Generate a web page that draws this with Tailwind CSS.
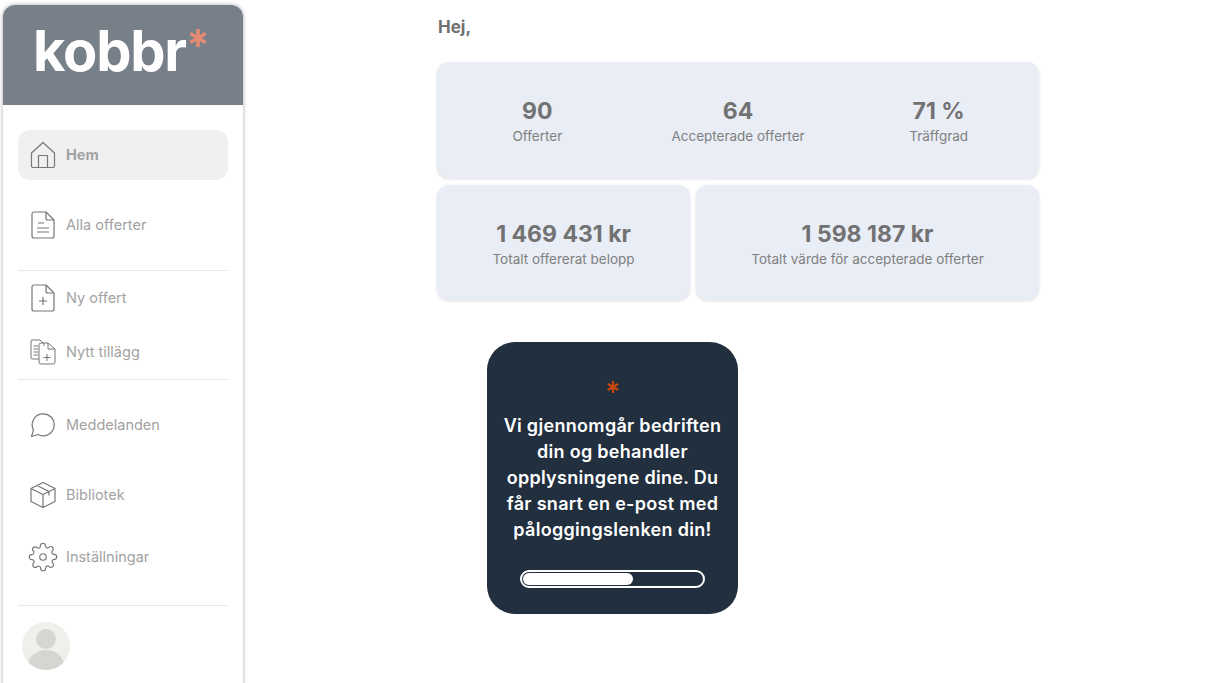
<!DOCTYPE html>
<html lang="en">
<head>
  <meta charset="UTF-8" />
  <title>Kobbr</title>
  <script src="https://cdn.jsdelivr.net/npm/@tailwindcss/browser@4"></script>
</head>
<body class="bg-white font-['Inter',sans-serif] h-[683px] overflow-hidden">
  <div class="flex h-[683px] overflow-hidden">
    <!-- sidebar -->
    <aside class="ml-[3px] mt-[5px] w-[240px] h-[700px] shrink-0 bg-white rounded-t-xl shadow-[0_0_4px_rgba(0,0,0,0.35)]">
      <div class="h-[100px] bg-[#777f89] rounded-t-xl flex items-start pl-[30px] pt-[10px]">
        <span class="text-[56px] leading-[72px] font-bold tracking-[-1.2px] text-white">kobbr</span>
        <svg class="w-[20px] h-[20px] mt-[13px] ml-[2px]" viewBox="0 0 22 22" fill="none" stroke="#e58a72" stroke-width="4"><path d="M11 1v20M2.500 6l17 10M19.500 6l-17 10"/></svg>
      </div>
      <nav class="px-[15px] pt-[25px] text-[14.500px] text-[#a2a2a2]">
        <a class="flex items-center h-[50px] rounded-xl bg-[#f0f0f0] font-bold pl-[12px] gap-[10px]">
          <svg class="w-[26px] h-[28px]" viewBox="0 0 26 28" fill="none" stroke="#777" stroke-width="1.200" stroke-linejoin="round"><path d="M1.500 12 13 1.500 24.500 12V25a1.500 1.500 0 0 1-1.500 1.500H3A1.500 1.500 0 0 1 1.500 25z"/><path d="M8.500 26.500V14.500h9v12"/></svg>
          Hem
        </a>
        <a class="flex items-center h-[50px] mt-[20px] pl-[12px] gap-[10px]">
          <svg class="w-[26px] h-[28px]" viewBox="0 0 26 28" fill="none" stroke="#777" stroke-width="1.200" stroke-linejoin="round"><path d="M16 1H4a2 2 0 0 0-2 2v22a2 2 0 0 0 2 2h18a2 2 0 0 0 2-2V9z"/><path d="M16 1v6a2 2 0 0 0 2 2h6M8 12h6M7 17h12M7 21h12"/></svg>
          Alla offerter
        </a>
        <div class="h-px bg-[#e8e8e8] mt-[20px]"></div>
        <a class="flex items-center h-[50px] mt-[2px] pl-[12px] gap-[10px]">
          <svg class="w-[26px] h-[28px]" viewBox="0 0 26 28" fill="none" stroke="#777" stroke-width="1.200" stroke-linejoin="round"><path d="M16 1H4a2 2 0 0 0-2 2v22a2 2 0 0 0 2 2h18a2 2 0 0 0 2-2V9z"/><path d="M16 1v6a2 2 0 0 0 2 2h6M13 13v8M9 17h8"/></svg>
          Ny offert
        </a>
        <a class="flex items-center h-[50px] mt-[4px] pl-[12px] gap-[10px]">
          <svg class="w-[26px] h-[26px]" viewBox="0 0 26 26" fill="none" stroke="#777" stroke-width="1" stroke-linejoin="round"><path d="M9 20H2a1 1 0 0 1-1-1V2a1 1 0 0 1 1-1h8l4 4v2"/><path d="M3.500 7H8M3.500 10H8M3.500 13H8M3.500 16H8"/><path d="M18 4h-7a2 2 0 0 0-2 2v17a2 2 0 0 0 2 2h12a2 2 0 0 0 2-2V10z"/><path d="M18 4v6h7M17 15v7M13.500 18.500h7"/></svg>
          Nytt tillägg
        </a>
        <div class="h-px bg-[#e8e8e8] mt-[2px]"></div>
        <a class="flex items-center h-[50px] mt-[20px] pl-[12px] gap-[10px]">
          <svg class="w-[26px] h-[26px]" viewBox="0 0 26 26" fill="none" stroke="#777" stroke-width="1.200" stroke-linejoin="round"><path d="M1.500 24.500 3.500 18A11 11 0 1 1 8 22.500z"/></svg>
          Meddelanden
        </a>
        <a class="flex items-center h-[50px] mt-[20px] pl-[12px] gap-[10px]">
          <svg class="w-[26px] h-[28px]" viewBox="0 0 26 28" fill="none" stroke="#777" stroke-width="1.200" stroke-linejoin="round"><path d="M13 1.500 25 7.500v13l-12 6-12-6v-13zM1 7.500l12 6 12-6M13 13.500v13M7 4.500l12 6v4"/></svg>
          Bibliotek
        </a>
        <a class="flex items-center h-[50px] mt-[12px] pl-[10px] gap-[8px]">
          <svg class="w-[30px] h-[30px]" viewBox="0 0 24 24" fill="none" stroke="#777" stroke-width="0.950" stroke-linejoin="round"><circle cx="12" cy="12" r="2.600"/><path d="M19.400 15a1.650 1.650 0 0 0 .33 1.820l.06.06a2 2 0 1 1-2.830 2.830l-.06-.06a1.650 1.650 0 0 0-2.800 1.170V21a2 2 0 1 1-4 0v-.09a1.650 1.650 0 0 0-2.800-1.170l-.06.06a2 2 0 1 1-2.830-2.830l.06-.06a1.650 1.650 0 0 0-1.170-2.800H3a2 2 0 1 1 0-4h.09a1.650 1.650 0 0 0 1.170-2.800l-.06-.06a2 2 0 1 1 2.830-2.830l.06.06a1.650 1.650 0 0 0 2.800-1.170V3a2 2 0 1 1 4 0v.09a1.650 1.650 0 0 0 2.800 1.170l.06-.06a2 2 0 1 1 2.830 2.830l-.06.06a1.650 1.650 0 0 0 1.170 2.800H21a2 2 0 1 1 0 4h-.09a1.650 1.650 0 0 0-1.510 1.110z"/></svg>
          Inställningar
        </a>
        <div class="h-px bg-[#e8e8e8] mt-[23px]"></div>
        <div class="mt-[16px] ml-[4px] w-[48px] h-[48px] rounded-full bg-[#f1efec] overflow-hidden flex flex-col items-center">
          <div class="w-[20px] h-[20px] rounded-full bg-[#d6d5d2] mt-[7px] shrink-0"></div>
          <div class="w-[36px] h-[30px] rounded-[50%] bg-[#d6d5d2] mt-[1px] shrink-0"></div>
        </div>
      </nav>
    </aside>

    <!-- main -->
    <main class="ml-[194px] w-[602px] shrink-0">
      <p class="pt-[17px] pl-[1px] text-[17px] leading-[20px] font-bold text-[#707070]">Hej,</p>
      <section class="mt-[25px] h-[116px] pt-[2px] rounded-xl bg-[#e9edf5] shadow-[0_1px_3px_rgba(0,0,0,0.14)] grid grid-cols-3 items-center text-center text-[#727272]">
        <div>
          <div class="text-[23px] leading-[28px] font-bold">90</div>
          <div class="mt-[2px] text-[13.500px] leading-[18px] text-[#808080]">Offerter</div>
        </div>
        <div>
          <div class="text-[23px] leading-[28px] font-bold">64</div>
          <div class="mt-[2px] text-[13.500px] leading-[18px] text-[#808080]">Accepterade offerter</div>
        </div>
        <div>
          <div class="text-[23px] leading-[28px] font-bold">71 %</div>
          <div class="mt-[2px] text-[13.500px] leading-[18px] text-[#808080]">Träffgrad</div>
        </div>
      </section>
      <section class="mt-[7px] flex gap-[6px] text-center text-[#727272]">
        <div class="w-[253px] h-[115px] pt-[2px] rounded-xl bg-[#e9edf5] shadow-[0_1px_3px_rgba(0,0,0,0.14)] flex flex-col justify-center">
          <div class="text-[23px] leading-[28px] font-bold">1 469 431 kr</div>
          <div class="mt-[2px] text-[13.500px] leading-[18px] text-[#808080]">Totalt offererat belopp</div>
        </div>
        <div class="flex-1 h-[115px] pt-[2px] rounded-xl bg-[#e9edf5] shadow-[0_1px_3px_rgba(0,0,0,0.14)] flex flex-col justify-center">
          <div class="text-[23px] leading-[28px] font-bold">1 598 187 kr</div>
          <div class="mt-[2px] text-[13.500px] leading-[18px] text-[#808080]">Totalt värde för accepterade offerter</div>
        </div>
      </section>

      <div class="mt-[42px] ml-[50px] w-[251px] h-[272px] rounded-[28px] bg-[#222f3e] flex flex-col items-center text-white">
        <svg class="w-[12px] h-[12px] mt-[39px]" viewBox="0 0 12 12" fill="none" stroke="#c8470d" stroke-width="2.200"><path d="M6 0v12M.8 3l10.400 6M11.200 3 .8 9"/></svg>
        <p class="mt-[20px] text-[18px] leading-[26px] tracking-[0.3px] font-semibold text-center whitespace-nowrap">Vi gjennomgår bedriften<br>din og behandler<br>opplysningene dine. Du<br>får snart en e-post med<br>påloggingslenken din!</p>
        <div class="mt-[27px] w-[185px] h-[18px] rounded-full border-2 border-white p-px">
          <div class="w-[110px] h-full rounded-full bg-white"></div>
        </div>
      </div>
    </main>
  </div>
</body>
</html>
